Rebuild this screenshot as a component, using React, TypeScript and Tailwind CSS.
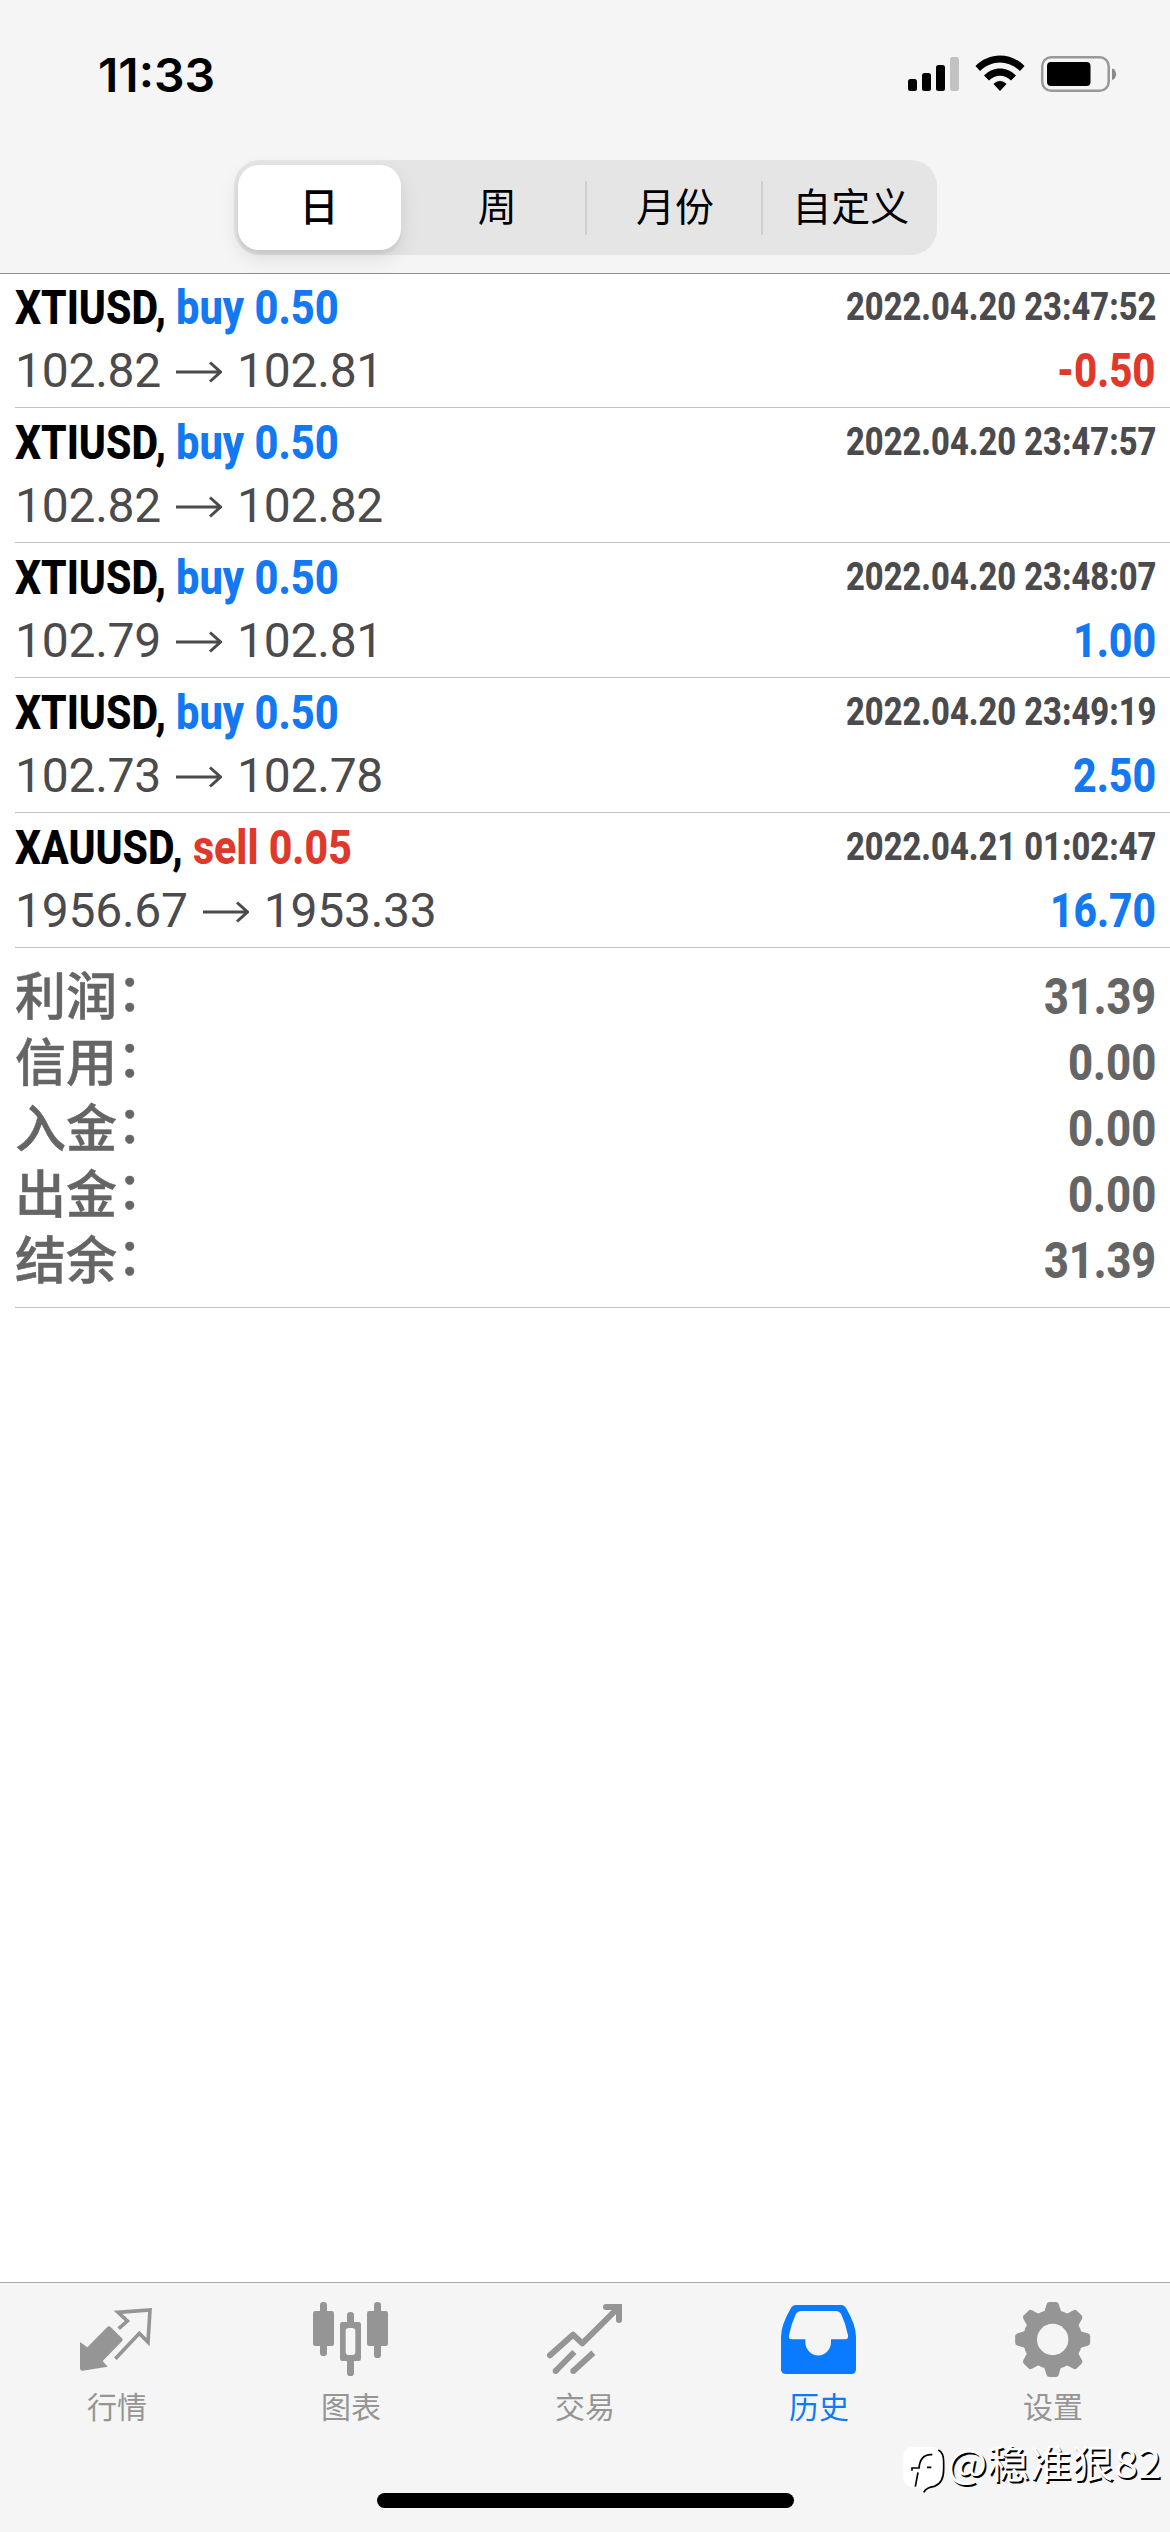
import { useLayoutEffect, useRef, useState } from 'react';
import type { ReactNode } from 'react';
import clsx from 'clsx';

type Deal = {
  symbol: string;
  symbolWidth: number;
  side: 'buy' | 'sell';
  volume: string;
  open: string;
  close: string;
  time: string;
  profit?: string;
  profitWidth?: number;
};

const deals: Deal[] = [
  { symbol: 'XTIUSD', symbolWidth: 151, side: 'buy', volume: '0.50', open: '102.82', close: '102.81', time: '2022.04.20 23:47:52', profit: '-0.50', profitWidth: 99 },
  { symbol: 'XTIUSD', symbolWidth: 151, side: 'buy', volume: '0.50', open: '102.82', close: '102.82', time: '2022.04.20 23:47:57' },
  { symbol: 'XTIUSD', symbolWidth: 151, side: 'buy', volume: '0.50', open: '102.79', close: '102.81', time: '2022.04.20 23:48:07', profit: '1.00', profitWidth: 83 },
  { symbol: 'XTIUSD', symbolWidth: 151, side: 'buy', volume: '0.50', open: '102.73', close: '102.78', time: '2022.04.20 23:49:19', profit: '2.50', profitWidth: 83 },
  { symbol: 'XAUUSD', symbolWidth: 168, side: 'sell', volume: '0.05', open: '1956.67', close: '1953.33', time: '2022.04.21 01:02:47', profit: '16.70', profitWidth: 106 },
];

const summary = [
  { label: '利润', value: '31.39', width: 112 },
  { label: '信用', value: '0.00', width: 88 },
  { label: '入金', value: '0.00', width: 88 },
  { label: '出金', value: '0.00', width: 88 },
  { label: '结余', value: '31.39', width: 112 },
];

const periods = ['日', '周', '月份', '自定义'];

// Condensed text: squeezes its content horizontally to a given width
function Condensed({ width, className, children }: { width: number; className?: string; children: ReactNode }) {
  const ref = useRef<HTMLSpanElement>(null);
  const [scale, setScale] = useState(1);

  useLayoutEffect(() => {
    if (ref.current) setScale(width / ref.current.offsetWidth);
  }, [width]);

  return (
    <span className={clsx('block shrink-0', className)} style={{ width }}>
      <span
        ref={ref}
        className="inline-block origin-left whitespace-pre"
        style={{ transform: `scaleX(${scale})` }}
      >
        {children}
      </span>
    </span>
  );
}

function StatusBar() {
  return (
    <div className="flex h-[149px] items-start justify-between pl-[98px] pr-[53px] pt-[50px]">
      <Condensed width={117} className="font-['Inter'] text-[46px] font-semibold leading-[50px] text-black">
        11:33
      </Condensed>
      <svg className="mt-[2px] h-[44px] w-[210px]" viewBox="906 52 210 44">
        <rect x="907" y="79" width="9" height="12" rx="2.5" />
        <rect x="921" y="73" width="9" height="18" rx="2.5" />
        <rect x="935" y="65" width="9" height="26" rx="2.5" />
        <rect x="949" y="57" width="9" height="34" rx="2.5" fill="#c2c2c2" />
        <path d="M974.5 66 C988 52 1010 52 1023.500 66 L1019 71 C1007 59.500 991 59.500 979 71 Z" />
        <path d="M983 75.500 C992 66 1006 66 1015 75.500 L1010 80.500 C1004 74 994 74 988 80.500 Z" />
        <path d="M992.500 84 C996 80 1002 80 1005.500 84 L999 91 Z" />
        <rect x="1041.200" y="57.200" width="66.500" height="33.600" rx="9" fill="none" stroke="#989898" strokeWidth="2.500" />
        <rect x="1046" y="62" width="43.500" height="24" rx="4" />
        <path d="M1111 68.500 C1116.500 70 1116.500 78.500 1111 80 Z" fill="#8a8a8a" />
      </svg>
    </div>
  );
}

function PeriodTabs() {
  return (
    <div className="mx-auto mt-[11px] flex h-[95px] w-[703px] rounded-[26px] bg-[#e5e5e6] py-[5px] pl-[4px] font-['Noto_Sans_CJK_SC',sans-serif] text-[39px] leading-none text-black">
      {periods.map((p, i) => (
        <div
          key={p}
          className={clsx(
            'flex items-center justify-center',
            i === 0
              ? 'mr-[9px] w-[163px] shrink-0 rounded-[21px] bg-white font-medium shadow-[0_8px_20px_rgba(0,0,0,0.1),0_4px_3px_rgba(0,0,0,0.05)]'
              : 'flex-1',
          )}
        >
          {i > 1 && <span className="-mr-[2px] h-[54px] w-[2px] shrink-0 rounded bg-[#cfcfd1]" />}
          <span className={clsx('flex-1 pb-[6px] text-center', i > 1 && 'pl-[4px]')}>{p}</span>
        </div>
      ))}
    </div>
  );
}

function Arrow() {
  return (
    <svg className="mx-[15px] mt-[2px] h-[22px] w-[46px]" viewBox="0 0 46 22" fill="none" stroke="#4b4a4d" strokeWidth="3">
      <path d="M0 11 H44 M34 1.500 L44.500 11 L34 20.500" />
    </svg>
  );
}

function DealRow({ deal }: { deal: Deal }) {
  return (
    <li className="h-[135px] border-b border-[#c2c2c4] pr-[14px] pt-[3px] font-['Roboto']">
      <div className="flex h-[63px] items-center justify-between">
        <div className="flex gap-[10px] text-[48px] font-extrabold leading-[63px]">
          <Condensed width={deal.symbolWidth} className="text-black">{deal.symbol},</Condensed>
          <Condensed
            width={deal.side === 'buy' ? 163 : 159}
            className={deal.side === 'buy' ? 'text-[#1279f3]' : 'text-[#e0382a]'}
          >
            {deal.side} {deal.volume}
          </Condensed>
        </div>
        <Condensed width={310} className="text-[39px] font-extrabold leading-[63px] text-[#4b4a4d]">
          {deal.time}
        </Condensed>
      </div>
      <div className="flex h-[63px] items-center justify-between">
        <div className="flex items-center text-[48px] leading-[63px] tracking-[-0.25px] text-[#4b4a4d]">
          <span>{deal.open}</span>
          <Arrow />
          <span>{deal.close}</span>
        </div>
        {deal.profit && (
          <Condensed
            width={deal.profitWidth ?? 83}
            className={clsx(
              'text-[48px] font-extrabold leading-[63px]',
              deal.profit.startsWith('-') ? 'text-[#e0382a]' : 'text-[#1279f3]',
            )}
          >
            {deal.profit}
          </Condensed>
        )}
      </div>
    </li>
  );
}

function Summary() {
  return (
    <div className="h-[360px] border-b border-[#c2c2c4] pr-[14px] pt-[16px] text-[#656565]">
      {summary.map((s) => (
        <div key={s.label} className="flex h-[66px] items-center justify-between">
          <span className="flex font-['Roboto','Noto_Sans_CJK_SC',sans-serif] text-[51px] font-medium leading-[66px] [-webkit-text-stroke:0.5px_#656565]">
            <span className="pt-px">{s.label}</span>
            <span className="-mt-[3px]">：</span>
          </span>
          <Condensed width={s.width} className="font-['Roboto'] text-[50px] font-extrabold leading-[66px]">
            {s.value}
          </Condensed>
        </div>
      ))}
    </div>
  );
}

const gearTooth = 'M522 130 L530 102 Q532 96 538 96 L558 96 Q564 96 566 102 L575 130 Z';

const tabs = [
  {
    label: '行情',
    viewBox: '234 90 234 234',
    icon: (
      <>
        <path d="M240 216 L262 232 L322 171 Q327 166 332 171 L366 205 Q371 210 366 214 L308 273 L323 290 L248 302 Q240 302 240 294 Z" />
        <path d="M356 176 L382 153 L354 127 L450 120 L444 216 L418 190 L346 266" fill="none" stroke="currentColor" strokeWidth="11" />
      </>
    ),
  },
  {
    label: '图表',
    viewBox: '936 90 234 234',
    icon: (
      <>
        <rect x="939" y="123" width="63" height="105" rx="7" />
        <rect x="960" y="96" width="21" height="162" rx="10" />
        <rect x="1101" y="123" width="63" height="105" rx="7" />
        <rect x="1122" y="96" width="21" height="168" rx="10" />
        <rect x="1041" y="126" width="21" height="192" rx="10" />
        <rect x="1020" y="156" width="63" height="117" rx="7" />
        <rect x="1037" y="174" width="29" height="81" rx="10" fill="#f5f5f5" />
      </>
    ),
  },
  {
    label: '交易',
    viewBox: '318 90 234 234',
    icon: (
      <>
        <g fill="none" stroke="currentColor" strokeWidth="18" strokeLinecap="round">
          <path d="M330 256 L399 194 L427 220 L532 116" strokeLinejoin="round" />
          <path d="M498 111 H537 V150" />
        </g>
        <path d="M510 102 H540 Q546 102 546 108 V140 Z" />
        <path d="M347 303 L403 246 M400 303 L460 248" stroke="currentColor" strokeWidth="18" />
        <circle cx="347" cy="303" r="9" />
        <circle cx="400" cy="303" r="9" />
      </>
    ),
  },
  {
    label: '历史',
    viewBox: '1020 90 234 234',
    icon: (
      <>
        <path d="M1068 105 H1203 Q1213 105 1218 114 Q1248 165 1248 200 V298 Q1248 312 1234 312 H1038 Q1023 312 1023 298 V200 Q1023 165 1053 114 Q1058 105 1068 105 Z" />
        <path d="M1083 123 H1188 Q1198 123 1203 131 Q1217 160 1224 196 Q1226 208 1216 208 H1173 V216 A38 40 0 0 1 1096 216 V208 H1055 Q1045 208 1047 196 Q1054 160 1068 131 Q1073 123 1083 123 Z" fill="#f5f5f5" />
      </>
    ),
  },
  {
    label: '设置',
    viewBox: '432 90 234 234',
    icon: (
      <>
        {[0, 45, 90, 135, 180, 225, 270, 315].map((deg) => (
          <path key={deg} d={gearTooth} transform={`rotate(${deg} 548 208.500)`} />
        ))}
        <circle cx="548" cy="208.500" r="89" />
        <circle cx="548" cy="208.500" r="47" fill="#f5f5f5" />
      </>
    ),
  },
];

function TabBar() {
  return (
    <nav className="relative h-[250px] border-t border-[#a9a9ab] bg-[#f5f5f5] font-['Noto_Sans_CJK_SC',sans-serif]">
      <div className="grid grid-cols-5 pt-[17px]">
        {tabs.map((t) => (
          <div
            key={t.label}
            className={clsx(
              'flex flex-col items-center',
              t.label === '历史' ? 'text-[#0a7aff]' : 'text-[#959595]',
            )}
          >
            <svg className="size-[78px]" viewBox={t.viewBox} fill="currentColor">
              {t.icon}
            </svg>
            <span className="mt-[9px] text-[30px] leading-[36px]">{t.label}</span>
          </div>
        ))}
      </div>

      {/* Home indicator */}
      <div className="mx-auto mt-[70px] h-[15px] w-[417px] rounded-full bg-black" />

      {/* Author tag */}
      <div className="absolute right-[8px] top-[153px] flex items-start">
        <svg className="mt-[9px] h-[50px] w-[46px]" viewBox="84 525 138 150">
          <path d="M122 530 H175 Q211 534 211 565 V605 Q211 645 176 650 L150 668 L146 652 H122 Q90 650 90 615 V565 Q90 530 122 530 Z" fill="#fff" />
          <path d="M196 540 Q212 548 212 575 V598 Q212 640 184 649 Q160 652 152 667" fill="none" stroke="#000" strokeWidth="5" />
          <path d="M178 554 Q142 551 138 594 H117 V602 M135 607 L127 650 M162 592 H175" fill="none" stroke="#000" strokeWidth="5" />
        </svg>
        <Condensed
          width={214}
          className="mr-[1px] text-[39px] leading-[50px] text-white [text-shadow:1.500px_1.500px_0_#000]"
        >
          @稳准狠82
        </Condensed>
      </div>
    </nav>
  );
}

export default function App() {
  return (
    <div className="flex h-[2532px] w-[1170px] flex-col overflow-hidden bg-white">
      <header className="h-[274px] shrink-0 border-b border-[#8e8e92] bg-[#f5f5f5]">
        <StatusBar />
        <PeriodTabs />
      </header>
      <main className="-mt-px flex-1 pl-[15px]">
        <ul>
          {deals.map((deal) => (
            <DealRow key={deal.time} deal={deal} />
          ))}
        </ul>
        <Summary />
      </main>
      <TabBar />
    </div>
  );
}
